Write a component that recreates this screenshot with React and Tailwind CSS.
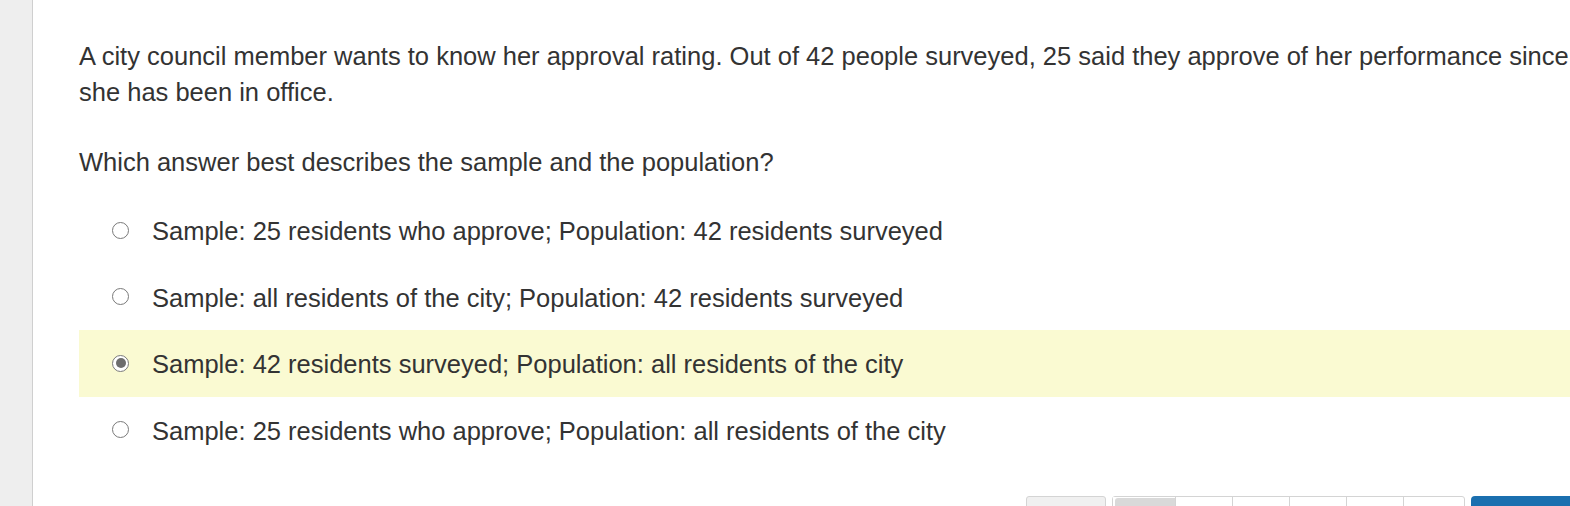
import React from "react";

const options = [
  { text: "Sample: 25 residents who approve; Population: 42 residents surveyed", checked: false },
  { text: "Sample: all residents of the city; Population: 42 residents surveyed", checked: false },
  { text: "Sample: 42 residents surveyed; Population: all residents of the city", checked: true },
  { text: "Sample: 25 residents who approve; Population: all residents of the city", checked: false },
];

function Radio({ checked }) {
  return (
    <div className="w-[17px] h-[17px] rounded-full border border-[#7a7a7a] bg-white flex items-center justify-center shrink-0">
      {checked && <div className="w-[10px] h-[10px] rounded-full bg-[#6d6d6d]" />}
    </div>
  );
}

export default function App() {
  return (
    <div
      className="w-[1570px] h-[506px] overflow-hidden flex bg-white text-[#333333]"
      style={{ fontFamily: '"Liberation Sans", Arial, sans-serif' }}
    >
      <div className="w-[33px] shrink-0 bg-[#eeeeee] border-r border-[#cfcfcf]" />
      <div className="flex-1 min-w-0 pl-[46px] relative">
        <div className="w-[1540px]">
          <p className="text-[25.5px] leading-[36px] mt-[38px] w-[1510px]">
            A city council member wants to know her approval rating. Out of 42 people surveyed, 25 said they approve of her performance since she has been in office.
          </p>
          <p className="text-[25.5px] leading-[36px] mt-[34px]">
            Which answer best describes the sample and the population?
          </p>
          <div className="mt-[17px] flex flex-col">
            {options.map((o, i) => (
              <div
                key={i}
                className={`h-[66.5px] flex items-center pl-[33px] ${o.checked ? "bg-[#fafad2]" : ""}`}
              >
                <Radio checked={o.checked} />
                <span className="ml-[23px] text-[25.5px] leading-[36px] pt-[2px]">{o.text}</span>
              </div>
            ))}
          </div>
        </div>
        <div className="absolute top-[496px] left-[993px] flex items-start">
          <div className="w-[80px] h-[20px] bg-[#f0f0f0] border border-[#d4d4d4] rounded-t-[3px]" />
          <div className="ml-[6px] w-[353px] h-[20px] border border-[#d4d4d4] rounded-t-[3px] flex">
            <div className="w-[63px] h-full border-r border-[#d4d4d4] bg-white relative">
              <div className="absolute left-[2px] top-[1px] w-[60px] h-[18px] bg-[#d9d9d9] rounded-tl-[3px]" />
            </div>
            <div className="w-[57px] h-full border-r border-[#d4d4d4]" />
            <div className="w-[57px] h-full border-r border-[#d4d4d4]" />
            <div className="w-[57px] h-full border-r border-[#d4d4d4]" />
            <div className="w-[57px] h-full border-r border-[#d4d4d4]" />
            <div className="flex-1 h-full" />
          </div>
          <div className="ml-[6px] w-[120px] h-[20px] bg-[#1a6faf] rounded-tl-[4px]" />
        </div>
      </div>
    </div>
  );
}
